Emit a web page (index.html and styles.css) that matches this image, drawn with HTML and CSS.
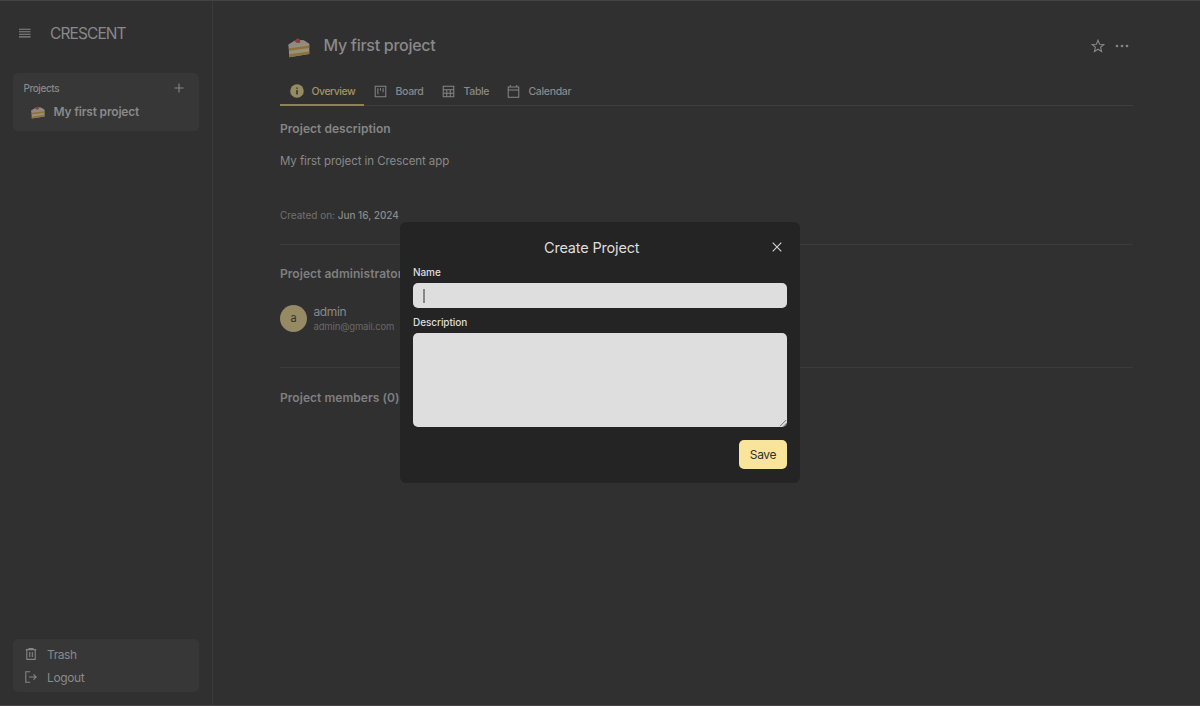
FILE: index.html
```html
<!DOCTYPE html>
<html lang="en">
<head>
<meta charset="utf-8">
<title>Crescent</title>
<link rel="stylesheet" href="styles.css">
</head>
<body>
<svg class="defs" width="0" height="0">
  <symbol id="cake" viewBox="0 0 24 22">
    <path d="M1.5 8.5 9.5 3.8 17 4.4 22.3 8V18L2.3 21.3Z" fill="#99907a"/>
    <path d="M1.5 8.8 9.5 3.8 17 4.4 22.3 8 2 11.2Z" fill="#8f8b84"/>
    <path d="M1.9 12.2 22.3 9.6V12L2 14.8Z" fill="#8d733b"/>
    <path d="M2.1 18.3 22.3 15.4V18L2.3 21.3Z" fill="#8d733b"/>
    <path d="M8 5.8Q8 2.6 10.8 2.4 13.8 2.7 13.2 6.2 11 8.2 8 5.8Z" fill="#8b3d39"/>
  </symbol>
</svg>
<div class="app">
  <aside class="sidebar">
    <header class="brand">
      <svg class="menu" viewBox="0 0 12 10"><path d="M0 1.2h11.5M0 3.8h11.5M0 6.3h11.5M0 8.9h11.5"/></svg>
      <span class="brand-name">CRESCENT</span>
    </header>
    <section class="card projects">
      <div class="projects-head"><span>Projects</span>
        <svg class="plus" viewBox="0 0 10 10"><path d="M5 .5v9M.5 5h9"/></svg></div>
      <div class="project-link"><svg class="cake-small"><use href="#cake"/></svg><span>My first project</span></div>
    </section>
    <nav class="card side-nav">
      <div class="side-item"><svg viewBox="0 0 12 12"><path d="M.8 1.6h10.4M4 1.4V.6h4v.8M1.8 1.8v9.6h8.4V1.8M4.7 4v5M7.3 4v5"/></svg><span>Trash</span></div>
      <div class="side-item"><svg viewBox="0 0 12 12"><path d="M5.2 .8H.8v10.4h4.4M4 6h7.2M8.5 3.3 11.2 6 8.5 8.7"/></svg><span>Logout</span></div>
    </nav>
  </aside>
  <main class="main">
    <header class="title-row">
      <svg class="cake-large"><use href="#cake"/></svg>
      <h1>My first project</h1>
      <svg class="star" viewBox="0 0 14 14"><path d="M7 1.2 8.6 5.2 12.8 5.5 9.6 8.3 10.6 12.5 7 10.2 3.4 12.5 4.4 8.3 1.2 5.5 5.4 5.2Z"/></svg>
      <svg class="dots" viewBox="0 0 14 4"><circle cx="2" cy="2" r="1.35"/><circle cx="7" cy="2" r="1.35"/><circle cx="12" cy="2" r="1.35"/></svg>
    </header>
    <nav class="tabs">
      <div class="tab active"><svg viewBox="0 0 14 14"><circle class="info-disc" cx="7" cy="7" r="6.8"/><path class="info-mark" d="M7 3.5v1.3M7 6v4.4"/></svg><span>Overview</span></div>
      <div class="tab board"><svg viewBox="0 0 14 14"><path d="M1.3 1.3h11.4v11.4H1.3ZM4.2 3.5v6.5M7 3.5v2.4M9.8 3.5v4.2"/></svg><span>Board</span></div>
      <div class="tab table"><svg viewBox="0 0 14 14"><path d="M1.3 1.3h11.4v11.4H1.3ZM1.3 5h11.4M1.3 8.8h11.4M5.1 5v7.7M8.9 5v7.7"/></svg><span>Table</span></div>
      <div class="tab calendar"><svg viewBox="0 0 14 14"><path d="M1.3 2.2h11.4v11H1.3ZM1.3 5.4h11.4M3.5 0v2.3M10.5 0v2.3"/></svg><span>Calendar</span></div>
    </nav>
    <section class="about">
      <h2 class="h-desc">Project description</h2>
      <p class="desc">My first project in Crescent app</p>
      <p class="created">Created on: <b>Jun 16, 2024</b></p>
    </section>
    <section class="admins">
      <h2>Project administrator</h2>
      <div class="person">
        <div class="avatar">a</div>
        <div><div class="person-name">admin</div><div class="person-mail">admin@gmail.com</div></div>
      </div>
    </section>
    <section class="members"><h2>Project members (0)</h2></section>
  </main>
</div>
<div class="overlay">
  <form class="modal">
    <div class="modal-head"><span class="modal-title">Create Project</span>
      <svg class="close" viewBox="0 0 10 10"><path d="M.7.7l8.6 8.6M9.3.7.7 9.3"/></svg></div>
    <div class="label l-name">Name</div>
    <div class="field"><i class="caret"></i></div>
    <div class="label l-desc">Description</div>
    <div class="area"><svg viewBox="0 0 8 8"><path d="M1 7.2 7.2 1M4.2 7.5 7.5 4.2"/></svg></div>
    <div class="save"><span>Save</span></div>
  </form>
</div>
</body>
</html>
```
FILE: styles.css
```css
* { box-sizing: border-box; }
body { margin: 0; height: 706px; overflow: hidden; background: #303030; color: #898989; font-family: Inter, "Liberation Sans", sans-serif; font-size: 12px; }
h1, h2, p { margin: 0; }
span { white-space: nowrap; }
svg { flex: none; fill: none; stroke: #858585; stroke-width: 1.1; display: block; }
.defs { position: absolute; }
.cake-small, .cake-large { stroke: none; }
.app { display: flex; height: 706px; border-top: 1px solid #434343; border-bottom: 1px solid #484446; }
.sidebar { width: 213px; border-right: 1px solid #3a3a3a; padding: 0 13px 13px; display: flex; flex-direction: column; }
.brand { height: 72px; padding: 0 0 8px 6px; display: flex; align-items: center; gap: 19px; }
.menu { width: 12px; height: 10px; }
.brand-name { font-size: 15.5px; letter-spacing: -.9px; line-height: 18px; margin-top: 1px; }
.card { background: #373737; border-radius: 5px; width: 186px; }
.projects { height: 58px; padding: 5px 15px 0 10.5px; }
.projects-head { height: 20px; display: flex; align-items: center; justify-content: space-between; font-size: 10px; font-weight: 500; letter-spacing: -.42px; }
.plus { width: 10px; height: 10px; }
.project-link { height: 28px; display: flex; align-items: center; gap: 7.5px; padding: 0 0 1px 6.5px; font-size: 12px; font-weight: 600; letter-spacing: -.18px; }
.cake-small { width: 16px; height: 14px; }
.side-nav { height: 53px; margin-top: auto; padding: 3px 12px; }
.side-item { height: 23.5px; display: flex; align-items: center; gap: 10px; font-size: 12px; letter-spacing: -.4px; }
.side-item:first-child { padding-top: 1px; }
.side-item svg { width: 12px; height: 12px; }
.main { flex: 1; padding: 0 67px; }
.title-row { height: 76px; padding: 14px 4.5px 0 7px; display: flex; align-items: center; }
.cake-large { width: 24px; height: 22px; margin-top: 1px; }
h1 { font-size: 16px; font-weight: 500; letter-spacing: -.28px; margin-left: 12.5px; flex: 1; line-height: 20px; margin-bottom: 2px; }
.star { width: 14px; height: 14px; margin-right: 9.5px; }
.dots { width: 14px; height: 4px; fill: #858585; stroke: none; }
.tabs { height: 29px; border-bottom: 1px solid #3d3d3d; display: flex; font-size: 10.5px; font-weight: 500; letter-spacing: -.33px; }
.tab { height: 29px; display: flex; align-items: center; gap: 8.5px; }
.tab svg { width: 13px; height: 13px; }
.active { width: 84px; padding-left: 10px; gap: 7.5px; letter-spacing: -.5px; color: #a29466; border-bottom: 2px solid #8f8259; }
.tabs .active svg { width: 14px; height: 14px; stroke: none; margin-top: 1px; }
.active span { padding-top: 1px; }
.info-disc { fill: #968a63; }
.tabs .info-mark { stroke: #303030; stroke-width: 1.5; }
.board { padding-left: 10px; width: 78px; }
.table { width: 65px; }
.calendar { width: 75px; }
h2 { font-size: 12px; font-weight: 600; line-height: 16px; color: #7f7f7f; letter-spacing: .05px; }
.about { height: 139px; padding-top: 15px; border-bottom: 1px solid #3b3b3b; }
.h-desc { color: #858585; }
.desc { margin-top: 15.5px; line-height: 16px; font-size: 11.5px; letter-spacing: -.07px; }
.created { margin-top: 39.5px; line-height: 15px; font-size: 10px; color: #717171; letter-spacing: -.02px; }
.created b { font-weight: 500; color: #8a8a8a; }
.admins { height: 123px; padding-top: 21px; border-bottom: 1px solid #3b3b3b; }
.person { display: flex; gap: 6.5px; margin-top: 22px; }
.avatar { width: 27px; height: 27px; border-radius: 50%; background: #968a65; color: #303030; font-size: 11px; display: flex; align-items: center; justify-content: center; margin-top: .5px; }
.person-name { font-size: 12px; line-height: 15px; letter-spacing: -.4px; }
.person-mail { font-size: 9.5px; line-height: 15px; color: #686868; letter-spacing: -.14px; }
.members { padding-top: 22px; }
.overlay { position: absolute; inset: 0; padding: 222px 400px 0; }
.modal { width: 400px; height: 261px; background: #242424; border-radius: 6px; padding: 13px; color: #dedede; }
.modal-head { height: 24px; display: flex; align-items: center; justify-content: space-between; padding: 0 5.5px 0 131px; }
.modal-title { font-size: 14.5px; letter-spacing: -.18px; }
.close { width: 10px; height: 10px; stroke: #d5d5d5; }
.label { font-size: 10px; font-weight: 500; line-height: 14px; letter-spacing: -.07px; }
.l-name { margin-top: 6px; }
.field { height: 25px; margin-top: 4px; border-radius: 5px; background: #dedede; padding: 6px 10px; }
.caret { display: block; width: 1.5px; height: 14px; background: #888; }
.l-desc { margin-top: 7px; }
.area { height: 94px; margin-top: 4px; border-radius: 5px; background: #dedede; display: flex; align-items: flex-end; justify-content: flex-end; }
.area svg { width: 8px; height: 8px; stroke: #555; stroke-width: .8; }
.save { width: 48px; height: 29px; margin: 13.4px 0 0 auto; background: #f9e49b; color: #303030; border-radius: 5px; font-size: 12px; letter-spacing: -.35px; display: flex; align-items: center; justify-content: center; }
```
